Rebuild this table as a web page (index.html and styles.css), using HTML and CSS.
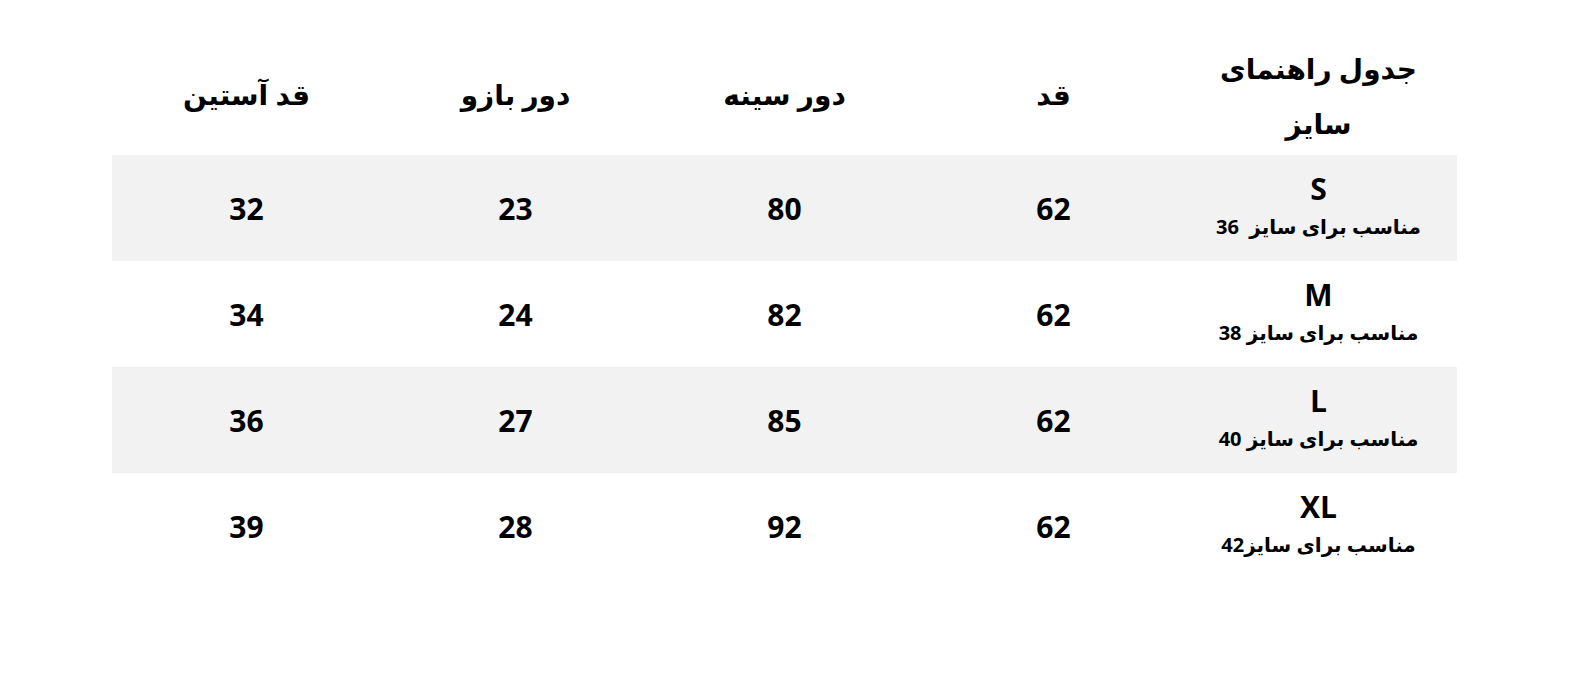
FILE: index.html
```html
<!DOCTYPE html>
<html lang="fa" dir="rtl">
<head>
<meta charset="utf-8">
<link rel="stylesheet" href="styles.css">
</head>
<body>
<div class="page">
  <table class="size-table">
    <colgroup>
      <col class="col"><col class="col"><col class="col"><col class="col"><col class="col">
    </colgroup>
    <thead>
      <tr>
        <th class="title">جدول راهنمای<br>سایز</th>
        <th>قد</th>
        <th>دور سینه</th>
        <th>دور بازو</th>
        <th>قد آستین</th>
      </tr>
    </thead>
    <tbody>
      <tr class="shade">
        <td class="size"><div class="code">S</div><div class="note">مناسب برای سایز &nbsp;36</div></td>
        <td>62</td><td>80</td><td>23</td><td>32</td>
      </tr>
      <tr>
        <td class="size"><div class="code">M</div><div class="note">مناسب برای سایز 38</div></td>
        <td>62</td><td>82</td><td>24</td><td>34</td>
      </tr>
      <tr class="shade">
        <td class="size"><div class="code">L</div><div class="note">مناسب برای سایز 40</div></td>
        <td>62</td><td>85</td><td>27</td><td>36</td>
      </tr>
      <tr>
        <td class="size"><div class="code">XL</div><div class="note">مناسب برای سایز42</div></td>
        <td>62</td><td>92</td><td>28</td><td>39</td>
      </tr>
    </tbody>
  </table>
</div>
</body>
</html>
```
FILE: styles.css
```css
html, body {
  margin: 0;
  padding: 0;
  background: #ffffff;
}
body {
  font-family: "Open Sans", "DejaVu Sans", sans-serif;
  color: #000;
}
.page {
  padding: 41px 116px 0 112px;
}
.size-table {
  width: 1345px;
  border-collapse: collapse;
  table-layout: fixed;
}
.size-table .col {
  width: 269px;
}
.size-table th,
.size-table td {
  box-sizing: border-box;
  text-align: center;
  vertical-align: middle;
  font-weight: 700;
  padding: 0;
}
.size-table th {
  height: 114px;
  font-size: 28px;
  line-height: 40px;
  padding-bottom: 8px;
}
.size-table th.title {
  line-height: 55px;
  padding: 0 8px 4px 0;
}
.size-table td {
  height: 106px;
  font-size: 30px;
}
.size-table tr.shade td {
  background: #f2f2f2;
}
.size-table td.size {
  padding-right: 8px;
}
.code {
  font-size: 30px;
  line-height: 38px;
  margin-top: -4px;
  margin-bottom: 7px;
}
.note {
  font-size: 20px;
  line-height: 32px;
  margin-top: -4px;
  margin-bottom: -1px;
}
```
